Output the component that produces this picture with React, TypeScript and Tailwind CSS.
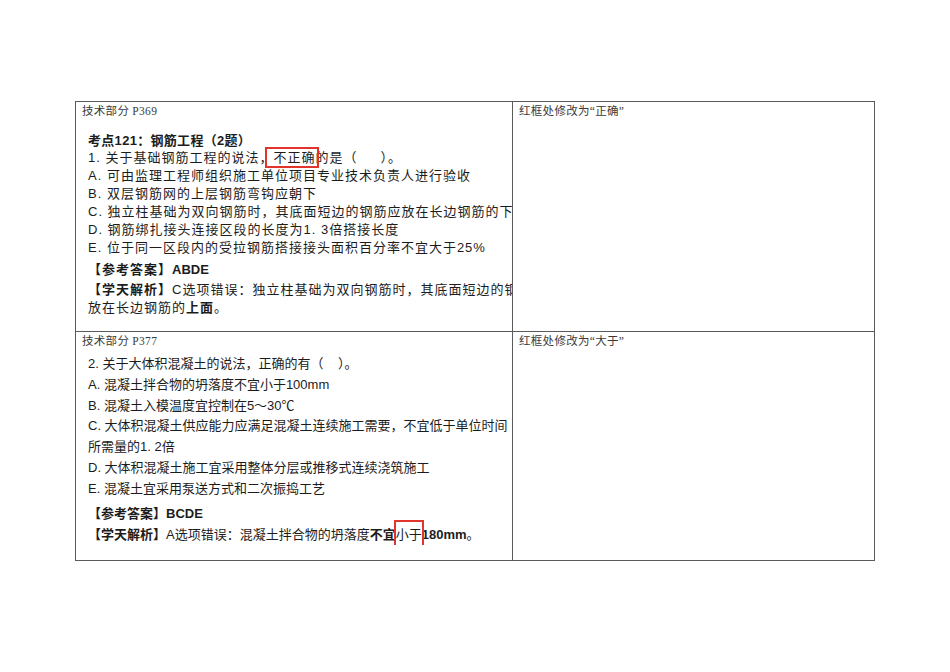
const sans = '"Liberation Sans", "Noto Sans CJK SC", sans-serif';
const serif = '"Liberation Serif", "Noto Sans CJK SC", serif';

function Header({ children }: { children: React.ReactNode }) {
  return (
    <div className="pl-[6px] pt-[2px] text-[11.5px] leading-[14px] tracking-[0.3px] text-[#3a3a3a]" style={{ fontFamily: serif }}>
      {children}
    </div>
  );
}

function Boxed({ children, className }: { children: React.ReactNode; className: string }) {
  return (
    <span className="relative">
      {children}
      <span className={`pointer-events-none absolute border-2 border-[#e0342c] ${className}`} />
    </span>
  );
}

function FirstQuestion() {
  return (
    <div className="overflow-hidden whitespace-nowrap pl-[12px] text-[#1c1c1c]" style={{ fontFamily: sans }}>
      <div className="mt-[15px] text-[13px] font-bold leading-[16px] tracking-[0.3px]">考点121：钢筋工程（2题）</div>
      <div className="text-[13px] leading-[18px] tracking-[1px]">
        <div>
          1. 关于基础钢筋工程的说法，
          <Boxed className="-left-[8px] -right-[4px] -top-[3px] -bottom-[3px]">不正确</Boxed>
          的是（&nbsp;&nbsp;&nbsp;&nbsp;&nbsp;）。
        </div>
        <div>A. 可由监理工程师组织施工单位项目专业技术负责人进行验收</div>
        <div>B. 双层钢筋网的上层钢筋弯钩应朝下</div>
        <div>C. 独立柱基础为双向钢筋时，其底面短边的钢筋应放在长边钢筋的下面</div>
        <div>D. 钢筋绑扎接头连接区段的长度为1. 3倍搭接长度</div>
        <div>E. 位于同一区段内的受拉钢筋搭接接头面积百分率不宜大于25%</div>
      </div>
      <div className="mt-[3px] text-[13px] leading-[20px] tracking-[1px]">
        <span className="font-bold">【参考答案】</span>
        <span className="font-bold tracking-normal">ABDE</span>
      </div>
      <div className="text-[13px] leading-[19px] tracking-[1px]">
        <span className="font-bold">【学天解析】</span>C选项错误：独立柱基础为双向钢筋时，其底面短边的钢筋应
      </div>
      <div className="text-[13px] leading-[18px] tracking-[1px]">
        放在长边钢筋的<span className="font-bold">上面</span>。
      </div>
    </div>
  );
}

function SecondQuestion() {
  return (
    <div className="overflow-hidden whitespace-nowrap pl-[12px] text-[#1c1c1c]" style={{ fontFamily: sans }}>
      <div className="mt-[6px] text-[13px] leading-[20.8px]">
        <div>2. 关于大体积混凝土的说法，正确的有（&nbsp;&nbsp;&nbsp;&nbsp;）。</div>
        <div>A. 混凝土拌合物的坍落度不宜小于100mm</div>
        <div>B. 混凝土入模温度宜控制在5～30℃</div>
        <div>C. 大体积混凝土供应能力应满足混凝土连续施工需要，不宜低于单位时间</div>
        <div>所需量的1. 2倍</div>
        <div>D. 大体积混凝土施工宜采用整体分层或推移式连续浇筑施工</div>
        <div>E. 混凝土宜采用泵送方式和二次振捣工艺</div>
      </div>
      <div className="mt-[3px] text-[13px] leading-[21px]">
        <span className="font-bold">【参考答案】BCDE</span>
      </div>
      <div className="text-[13px] leading-[21px]">
        <span className="font-bold">【学天解析】</span>A选项错误：混凝土拌合物的坍落度
        <span className="font-bold">不宜</span>
        <Boxed className="-left-[2px] -right-[2px] -top-[7px] -bottom-[6px]">小于</Boxed>
        <span className="font-bold">180mm</span>。
      </div>
    </div>
  );
}

export default function App() {
  return (
    <div className="min-h-[672px] w-[950px] bg-white pl-[75px] pt-[101px]">
      <div className="grid w-fit grid-cols-[437px_362px] grid-rows-[230px_229px] border-l border-t border-[#5a5a5a]">
        <div className="border-b border-r border-[#5a5a5a]">
          <Header>技术部分 P369</Header>
          <FirstQuestion />
        </div>
        <div className="border-b border-r border-[#5a5a5a]">
          <Header>红框处修改为“正确”</Header>
        </div>
        <div className="border-b border-r border-[#5a5a5a]">
          <Header>技术部分 P377</Header>
          <SecondQuestion />
        </div>
        <div className="border-b border-r border-[#5a5a5a]">
          <Header>红框处修改为“大于”</Header>
        </div>
      </div>
    </div>
  );
}
